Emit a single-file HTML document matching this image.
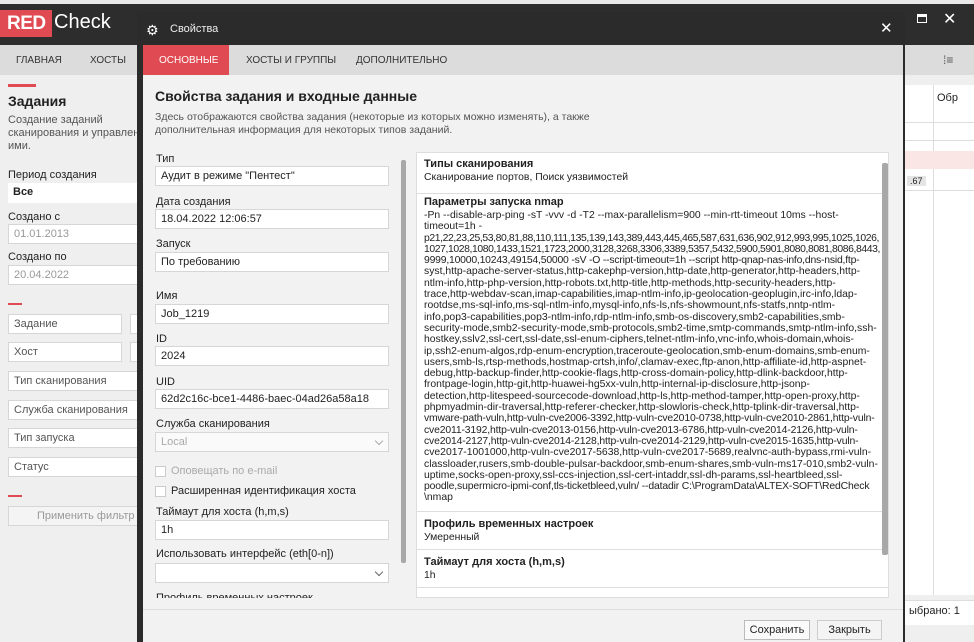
<!DOCTYPE html>
<html><head><meta charset="utf-8"><style>
*{margin:0;padding:0;box-sizing:border-box}
html,body{width:974px;height:642px;overflow:hidden}
body{position:relative;background:#efefef;font-family:"Liberation Sans","DejaVu Sans",sans-serif;font-size:11px;color:#222}
.a{position:absolute}
.inp{position:absolute;background:#fff;border:1px solid #d6d6d6;height:20px;padding:3px 5px;font-size:11px;white-space:nowrap;overflow:hidden}
.lbl{position:absolute;font-size:11px;color:#222}
.rp div{white-space:nowrap}
.sec{border-bottom:1px solid #ddd;padding:5px 7px 6px}
.sec b{display:block;font-size:11px;line-height:14px}
.chev{position:absolute;right:6px;top:5px;width:6px;height:6px;border-right:1.5px solid #666;border-bottom:1.5px solid #666;transform:rotate(45deg)}
.nm div{font-size:10.4px;line-height:11.3px}
.nm div.d{letter-spacing:-0.4px}
</style></head><body>
<div class="a" style="left:0;top:0;width:974px;height:4px;background:#e9e9e9"></div>
<div class="a" style="left:0;top:4px;width:974px;height:41px;background:#2d2d2d"></div>
<div class="a" style="left:0;top:10px;width:52px;height:27px;background:#e04a52;color:#fff;font-weight:bold;font-size:19px;padding:3px 0 0 7px;letter-spacing:-0.5px">RED</div>
<div class="a" style="left:54px;top:11px;color:#fff;font-size:20px">Check</div>
<div class="a" style="left:917px;top:14px;width:10px;height:9px;border:1.5px solid #fff;border-top-width:3px"></div>
<div class="a" style="left:943px;top:9px;color:#fff;font-size:16px">✕</div>
<div class="a" style="left:0;top:45px;width:974px;height:30px;background:#dcdcdc"></div>
<div class="a" style="left:16px;top:55px;font-size:10px;color:#333">ГЛАВНАЯ</div>
<div class="a" style="left:90px;top:55px;font-size:10px;color:#333">ХОСТЫ</div>
<div class="a" style="left:943px;top:53px;font-size:12px;color:#555">⁞≡</div>
<div class="a" style="left:8px;top:84px;width:28px;height:3px;background:#e04a52"></div>
<div class="a" style="left:8px;top:93px;font-size:14px;font-weight:bold">Задания</div>
<div class="a" style="left:8px;top:114px;font-size:11px;color:#555;line-height:13px;width:140px">Создание заданий сканирования и управлени ими.</div>
<div class="a" style="left:8px;top:169px;font-size:11px">Период создания</div>
<div class="inp" style="left:8px;top:183px;width:130px;font-weight:bold;border:none">Все</div>
<div class="a" style="left:8px;top:211px">Создано с</div>
<div class="inp" style="left:8px;top:224px;width:130px;color:#999">01.01.2013</div>
<div class="a" style="left:8px;top:251px">Создано по</div>
<div class="inp" style="left:8px;top:265px;width:130px;color:#999">20.04.2022</div>
<div class="a" style="left:8px;top:303px;width:14px;height:2px;background:#e04a52"></div>
<div class="inp" style="left:8px;top:314px;width:114px;color:#555">Задание</div>
<div class="inp" style="left:130px;top:314px;width:10px"></div>
<div class="inp" style="left:8px;top:342px;width:114px;color:#555">Хост</div>
<div class="inp" style="left:130px;top:342px;width:10px"></div>
<div class="inp" style="left:8px;top:371px;width:132px;color:#555">Тип сканирования</div>
<div class="inp" style="left:8px;top:400px;width:132px;color:#555">Служба сканирования</div>
<div class="inp" style="left:8px;top:428px;width:132px;color:#555">Тип запуска</div>
<div class="inp" style="left:8px;top:457px;width:132px;color:#555">Статус</div>
<div class="a" style="left:8px;top:495px;width:14px;height:2px;background:#e04a52"></div>
<div class="inp" style="left:8px;top:506px;width:132px;color:#999;background:#f4f4f4;padding-left:28px">Применить фильтр</div>
<div class="a" style="left:905px;top:85px;width:69px;height:510px;background:#fff"></div>
<div class="a" style="left:933px;top:85px;width:1px;height:510px;background:#ddd"></div>
<div class="a" style="left:937px;top:92px;font-size:11px">Обр</div>
<div class="a" style="left:905px;top:122px;width:69px;height:1px;background:#ddd"></div>
<div class="a" style="left:905px;top:140px;width:69px;height:1px;background:#ddd"></div>
<div class="a" style="left:905px;top:151px;width:69px;height:18px;background:#fbe6e6"></div>
<div class="a" style="left:907px;top:176px;font-size:9px;background:#e4e4e4;padding:0 3px">.67</div>
<div class="a" style="left:905px;top:190px;width:69px;height:1px;background:#ddd"></div>
<div class="a" style="left:905px;top:600px;width:69px;height:25px;background:#fff;border-top:1px solid #ddd"></div>
<div class="a" style="left:909px;top:605px;font-size:11px">ыбрано: 1</div>
<div class="a" style="left:137px;top:12px;width:768px;height:630px;background:#2b2b2b"></div>
<div class="a" style="left:146px;top:22px;color:#fff;font-size:14px">⚙</div>
<div class="a" style="left:170px;top:23px;color:#eee;font-size:11px">Свойства</div>
<div class="a" style="left:880px;top:19px;color:#fff;font-size:15px">✕</div>
<div class="a" style="left:143px;top:45px;width:760px;height:597px;background:#f2f2f2"></div>
<div class="a" style="left:143px;top:45px;width:760px;height:30px;background:#dcdcdc"></div>
<div class="a" style="left:143px;top:45px;width:86px;height:30px;background:#e04a52;color:#fff;font-size:10px;padding:10px 0 0 16px">ОСНОВНЫЕ</div>
<div class="a" style="left:246px;top:55px;font-size:10px;color:#333">ХОСТЫ И ГРУППЫ</div>
<div class="a" style="left:356px;top:55px;font-size:10px;color:#333">ДОПОЛНИТЕЛЬНО</div>
<div class="a" style="left:155px;top:88px;font-size:14px;font-weight:bold">Свойства задания и входные данные</div>
<div class="a" style="left:155px;top:111px;font-size:10.5px;color:#555;line-height:13px">Здесь отображаются свойства задания (некоторые из которых можно изменять), а также<br>дополнительная информация для некоторых типов заданий.</div>
<div class="lbl" style="left:156px;top:153px">Тип</div>
<div class="inp" style="left:155px;top:166px;width:234px">Аудит в режиме "Пентест"</div>
<div class="lbl" style="left:156px;top:196px">Дата создания</div>
<div class="inp" style="left:155px;top:209px;width:234px">18.04.2022 12:06:57</div>
<div class="lbl" style="left:156px;top:238px">Запуск</div>
<div class="inp" style="left:155px;top:252px;width:234px">По требованию</div>
<div class="lbl" style="left:156px;top:290px">Имя</div>
<div class="inp" style="left:155px;top:304px;width:234px">Job_1219</div>
<div class="lbl" style="left:156px;top:333px">ID</div>
<div class="inp" style="left:155px;top:346px;width:234px">2024</div>
<div class="lbl" style="left:156px;top:376px">UID</div>
<div class="inp" style="left:155px;top:389px;width:234px">62d2c16c-bce1-4486-baec-04ad26a58a18</div>
<div class="lbl" style="left:156px;top:418px">Служба сканирования</div>
<div class="inp" style="left:155px;top:432px;width:234px;color:#aaa;background:#fafafa">Local<span class="chev" style="border-color:#aaa"></span></div>
<div class="a" style="left:155px;top:466px;width:11px;height:11px;border:1px solid #ccc;background:#fff"></div>
<div class="lbl" style="left:171px;top:465px;color:#aaa">Оповещать по e-mail</div>
<div class="a" style="left:155px;top:486px;width:11px;height:11px;border:1px solid #ccc;background:#fff"></div>
<div class="lbl" style="left:171px;top:485px">Расширенная идентификация хоста</div>
<div class="lbl" style="left:156px;top:506px">Таймаут для хоста (h,m,s)</div>
<div class="inp" style="left:155px;top:520px;width:234px">1h</div>
<div class="lbl" style="left:156px;top:548px">Использовать интерфейс (eth[0-n])</div>
<div class="inp" style="left:155px;top:563px;width:234px"><span class="chev"></span></div>
<div class="a" style="left:156px;top:591px;height:7px;overflow:hidden;font-size:11px;line-height:14px">Профиль временных настроек</div>
<div class="a" style="left:401px;top:160px;width:5px;height:403px;background:#a8a8a8;border-radius:2px"></div>
<div class="a rp" style="left:416px;top:152px;width:473px;height:446px;background:#fff;border:1px solid #ddd;overflow:hidden;font-size:10.4px;line-height:14px;color:#222">
<div class="sec" style="padding-top:4px;height:41px"><b>Типы сканирования</b><div>Сканирование портов, Поиск уязвимостей</div></div>
<div class="sec nm" style="padding-top:1px;height:318px"><b style="margin-bottom:1px">Параметры запуска nmap</b>
<div>-Pn --disable-arp-ping -sT -vvv -d -T2 --max-parallelism=900 --min-rtt-timeout 10ms --host-</div>
<div>timeout=1h -</div>
<div class="d">p21,22,23,25,53,80,81,88,110,111,135,139,143,389,443,445,465,587,631,636,902,912,993,995,1025,1026,</div>
<div class="d">1027,1028,1080,1433,1521,1723,2000,3128,3268,3306,3389,5357,5432,5900,5901,8080,8081,8086,8443,</div>
<div style="letter-spacing:-0.2px">9999,10000,10243,49154,50000 -sV -O --script-timeout=1h --script http-qnap-nas-info,dns-nsid,ftp-</div>
<div>syst,http-apache-server-status,http-cakephp-version,http-date,http-generator,http-headers,http-</div>
<div>ntlm-info,http-php-version,http-robots.txt,http-title,http-methods,http-security-headers,http-</div>
<div>trace,http-webdav-scan,imap-capabilities,imap-ntlm-info,ip-geolocation-geoplugin,irc-info,ldap-</div>
<div>rootdse,ms-sql-info,ms-sql-ntlm-info,mysql-info,nfs-ls,nfs-showmount,nfs-statfs,nntp-ntlm-</div>
<div>info,pop3-capabilities,pop3-ntlm-info,rdp-ntlm-info,smb-os-discovery,smb2-capabilities,smb-</div>
<div>security-mode,smb2-security-mode,smb-protocols,smb2-time,smtp-commands,smtp-ntlm-info,ssh-</div>
<div>hostkey,sslv2,ssl-cert,ssl-date,ssl-enum-ciphers,telnet-ntlm-info,vnc-info,whois-domain,whois-</div>
<div>ip,ssh2-enum-algos,rdp-enum-encryption,traceroute-geolocation,smb-enum-domains,smb-enum-</div>
<div>users,smb-ls,rtsp-methods,hostmap-crtsh,info/,clamav-exec,ftp-anon,http-affiliate-id,http-aspnet-</div>
<div>debug,http-backup-finder,http-cookie-flags,http-cross-domain-policy,http-dlink-backdoor,http-</div>
<div>frontpage-login,http-git,http-huawei-hg5xx-vuln,http-internal-ip-disclosure,http-jsonp-</div>
<div>detection,http-litespeed-sourcecode-download,http-ls,http-method-tamper,http-open-proxy,http-</div>
<div>phpmyadmin-dir-traversal,http-referer-checker,http-slowloris-check,http-tplink-dir-traversal,http-</div>
<div style="letter-spacing:-0.15px">vmware-path-vuln,http-vuln-cve2006-3392,http-vuln-cve2010-0738,http-vuln-cve2010-2861,http-vuln-</div>
<div style="letter-spacing:-0.15px">cve2011-3192,http-vuln-cve2013-0156,http-vuln-cve2013-6786,http-vuln-cve2014-2126,http-vuln-</div>
<div style="letter-spacing:-0.15px">cve2014-2127,http-vuln-cve2014-2128,http-vuln-cve2014-2129,http-vuln-cve2015-1635,http-vuln-</div>
<div>cve2017-1001000,http-vuln-cve2017-5638,http-vuln-cve2017-5689,realvnc-auth-bypass,rmi-vuln-</div>
<div>classloader,rusers,smb-double-pulsar-backdoor,smb-enum-shares,smb-vuln-ms17-010,smb2-vuln-</div>
<div>uptime,socks-open-proxy,ssl-ccs-injection,ssl-cert-intaddr,ssl-dh-params,ssl-heartbleed,ssl-</div>
<div style="letter-spacing:-0.15px">poodle,supermicro-ipmi-conf,tls-ticketbleed,vuln/ --datadir C:\ProgramData\ALTEX-SOFT\RedCheck</div>
<div>\nmap</div></div>
<div class="sec" style="padding-top:5px;height:38px"><b>Профиль временных настроек</b><div>Умеренный</div></div>
<div class="sec" style="padding-top:5px;height:38px"><b>Таймаут для хоста (h,m,s)</b><div>1h</div></div>
</div>
<div class="a" style="left:882px;top:163px;width:6px;height:392px;background:#a8a8a8;border-radius:2px"></div>
<div class="a" style="left:143px;top:609px;width:760px;height:1px;background:#ddd"></div>
<div class="a" style="left:744px;top:620px;width:66px;height:20px;border:1px solid #bbb;background:#fafafa;font-size:11px;text-align:center;padding-top:3px">Сохранить</div>
<div class="a" style="left:817px;top:620px;width:65px;height:20px;border:1px solid #ccc;background:#f4f4f4;font-size:11px;text-align:center;padding-top:3px">Закрыть</div>
</body></html>
